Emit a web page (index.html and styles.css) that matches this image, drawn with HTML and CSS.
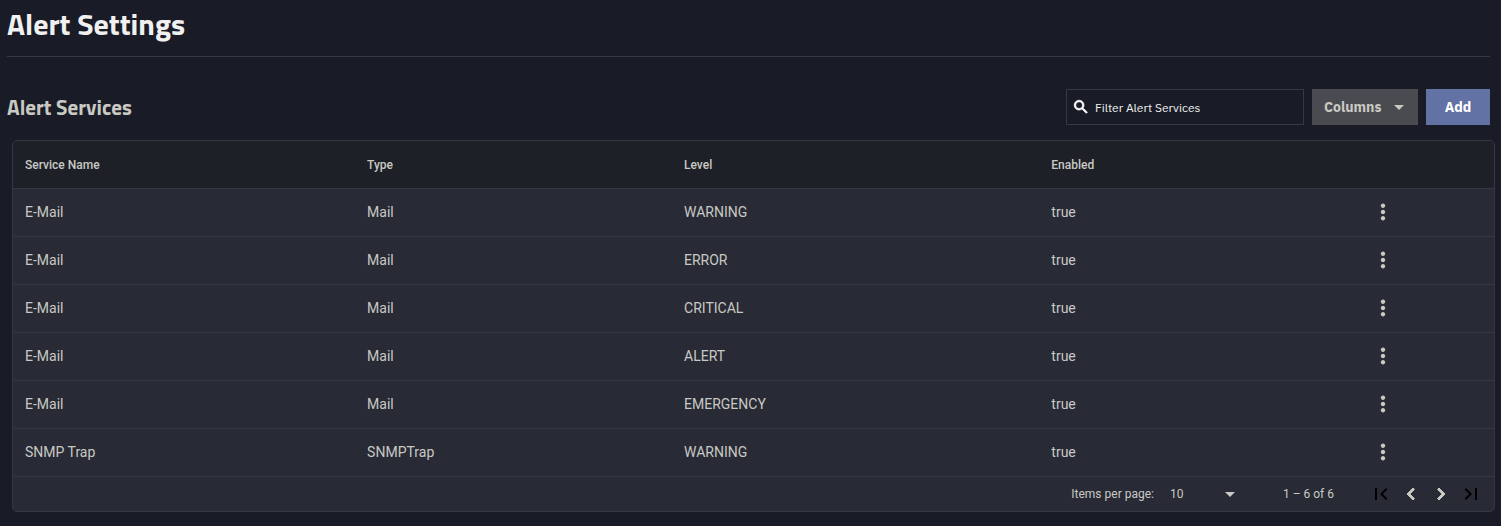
FILE: index.html
```html
<!DOCTYPE html>
<html lang="en">

<head>
    <meta charset="UTF-8">
    <meta name="viewport" content="width=device-width, initial-scale=1.0">
    <title>Alert Settings</title>
    <link rel="stylesheet" href="styles.css">
</head>

<body>
    <!-- Shared icons -->
    <svg class="sprite" aria-hidden="true">
        <symbol id="icon-more" viewBox="0 0 24 24">
            <path d="M12 8c1.2 0 2.2-1 2.2-2.2s-1-2.2-2.2-2.2-2.2 1-2.2 2.2 1 2.2 2.2 2.2zm0 1.8c-1.2 0-2.2 1-2.2 2.2s1 2.2 2.2 2.2 2.2-1 2.2-2.2-1-2.2-2.2-2.2zm0 6.2c-1.2 0-2.2 1-2.2 2.2s1 2.2 2.2 2.2 2.2-1 2.2-2.2-1-2.2-2.2-2.2z" />
        </symbol>
    </svg>

    <header class="page-header">
        <h1>Alert Settings</h1>
    </header>

    <main>
        <div class="toolbar">
            <h2>Alert Services</h2>
            <div class="search">
                <svg class="search-icon" viewBox="0 0 24 24" aria-hidden="true">
                    <path d="M15.5 14h-.79l-.28-.27C15.41 12.59 16 11.11 16 9.5 16 5.91 13.09 3 9.5 3S3 5.91 3 9.5 5.91 16 9.5 16c1.61 0 3.09-.59 4.23-1.57l.27.28v.79l5 4.99L20.49 19l-4.99-5zm-6 0C7.01 14 5 11.99 5 9.5S7.01 5 9.5 5 14 7.01 14 9.5 11.99 14 9.5 14z" />
                </svg>
                <input type="text" aria-label="Filter Alert Services" placeholder="Filter Alert Services">
            </div>
            <button type="button" class="btn btn-columns">Columns <span class="caret"></span></button>
            <button type="button" class="btn btn-add">Add</button>
        </div>

        <div class="card">
            <table>
                <thead>
                    <tr>
                        <th class="col-name">Service Name</th>
                        <th class="col-type">Type</th>
                        <th class="col-level">Level</th>
                        <th class="col-enabled">Enabled</th>
                        <td></td>
                    </tr>
                </thead>
                <tbody>
                    <tr>
                        <td>E-Mail</td>
                        <td>Mail</td>
                        <td>WARNING</td>
                        <td>true</td>
                        <td><button type="button" class="icon-btn" aria-label="More actions"><svg><use href="#icon-more" /></svg></button></td>
                    </tr>
                    <tr>
                        <td>E-Mail</td>
                        <td>Mail</td>
                        <td>ERROR</td>
                        <td>true</td>
                        <td><button type="button" class="icon-btn" aria-label="More actions"><svg><use href="#icon-more" /></svg></button></td>
                    </tr>
                    <tr>
                        <td>E-Mail</td>
                        <td>Mail</td>
                        <td>CRITICAL</td>
                        <td>true</td>
                        <td><button type="button" class="icon-btn" aria-label="More actions"><svg><use href="#icon-more" /></svg></button></td>
                    </tr>
                    <tr>
                        <td>E-Mail</td>
                        <td>Mail</td>
                        <td>ALERT</td>
                        <td>true</td>
                        <td><button type="button" class="icon-btn" aria-label="More actions"><svg><use href="#icon-more" /></svg></button></td>
                    </tr>
                    <tr>
                        <td>E-Mail</td>
                        <td>Mail</td>
                        <td>EMERGENCY</td>
                        <td>true</td>
                        <td><button type="button" class="icon-btn" aria-label="More actions"><svg><use href="#icon-more" /></svg></button></td>
                    </tr>
                    <tr>
                        <td>SNMP Trap</td>
                        <td>SNMPTrap</td>
                        <td>WARNING</td>
                        <td>true</td>
                        <td><button type="button" class="icon-btn" aria-label="More actions"><svg><use href="#icon-more" /></svg></button></td>
                    </tr>
                </tbody>
            </table>

            <!-- Pagination -->
            <div class="paginator">
                <label for="pageSize">Items per page:</label>
                <div class="page-size">
                    <select id="pageSize">
                        <option>10</option>
                        <option>25</option>
                        <option>50</option>
                    </select>
                    <span class="caret"></span>
                </div>
                <span class="range">1 – 6 of 6</span>
                <button type="button" class="page-btn" aria-label="First page" disabled>
                    <svg viewBox="0 0 24 24"><path d="M18.41 16.59L13.82 12l4.59-4.59L17 6l-6 6 6 6zM6 6h2v12H6z" /></svg>
                </button>
                <button type="button" class="page-btn page-btn-active" aria-label="Previous page">
                    <svg viewBox="0 0 24 24"><path d="M15.41 7.41L14 6l-6 6 6 6 1.41-1.41L10.83 12z" /></svg>
                </button>
                <button type="button" class="page-btn page-btn-active" aria-label="Next page">
                    <svg viewBox="0 0 24 24"><path d="M10 6L8.59 7.41 13.17 12l-4.58 4.59L10 18l6-6z" /></svg>
                </button>
                <button type="button" class="page-btn" aria-label="Last page" disabled>
                    <svg viewBox="0 0 24 24"><path d="M5.59 7.41L10.18 12l-4.59 4.59L7 18l6-6-6-6zM16 6h2v12h-2z" /></svg>
                </button>
            </div>
        </div>
    </main>
</body>

</html>
```
FILE: styles.css
```css
* {
    box-sizing: border-box;
}

body {
    margin: 0;
    background: #191b26;
    color: #c9c9c3;
    font-family: Roboto, "Liberation Sans", sans-serif;
    font-size: 14px;
}

.sprite {
    display: none;
}

svg {
    fill: currentColor;
}

h1,
h2 {
    margin: 0;
    font-family: "Titillium Web", "Noto Sans", sans-serif;
    font-weight: 700;
}

h1 {
    color: #f0f0f0;
    font-size: 30px;
    line-height: 48px;
}

h2 {
    margin-right: auto;
    font-size: 21px;
    line-height: 36px;
}

.page-header {
    margin: 0 11px 0 7px;
    padding-bottom: 8px;
    border-bottom: 1px solid #343746;
}

.toolbar {
    display: flex;
    gap: 8px;
    margin: 32px 11px 15px 7px;
}

.search {
    display: flex;
    align-items: center;
    gap: 5px;
    width: 238px;
    height: 36px;
    padding: 0 5px;
    border: 1px solid #343746;
}

.search-icon {
    flex: none;
    width: 18px;
    height: 18px;
    color: #fff;
    stroke: currentColor;
}

.search input {
    flex: 1;
    min-width: 0;
    padding: 0;
    border: 0;
    outline: 0;
    background: none;
    color: #f0f0f0;
    font: 12px "IBM Plex Sans", "Open Sans", sans-serif;
}

.search input::placeholder {
    color: #f0f0f0;
    opacity: 1;
}

.btn {
    display: flex;
    align-items: center;
    justify-content: center;
    height: 36px;
    padding: 0 12px;
    border: 0;
    font: 700 14px "IBM Plex Sans", "Noto Sans", sans-serif;
}

.btn-columns {
    justify-content: flex-start;
    gap: 12px;
    width: 106px;
    background: #4a4b50;
    color: #c9c9c3;
}

.btn-add {
    width: 64px;
    background: #6272a4;
    color: #fff;
}

.caret {
    border: 5px solid transparent;
    border-top-color: currentColor;
    border-bottom: 0;
}

/* Table */
.card {
    margin: 0 6px 0 12px;
    border: 1px solid #343746;
    border-radius: 5px;
    background: #282a36;
    overflow: hidden;
}

table {
    width: 100%;
    table-layout: fixed;
    border-collapse: separate;
    border-spacing: 0;
}

th,
td {
    height: 48px;
    padding: 0 12px;
    border-bottom: 1px solid #343746;
    text-align: left;
}

td {
    padding-bottom: 2px;
}

thead {
    background: #1d2027;
}

th {
    font-size: 12px;
    font-weight: 500;
}

.col-name {
    width: 23.1%;
}

.col-type {
    width: 21.4%;
}

.col-level {
    width: 24.8%;
}

.col-enabled {
    width: 21.6%;
}

.icon-btn,
.page-btn {
    display: block;
    padding: 0;
    border: 0;
    background: none;
    color: inherit;
}

.icon-btn svg {
    display: block;
    width: 24px;
    height: 24px;
}

/* Paginator */
.paginator {
    display: flex;
    align-items: center;
    justify-content: flex-end;
    height: 34px;
    padding-right: 8px;
    font-size: 12px;
}

.page-size {
    display: flex;
    align-items: center;
    width: 65px;
    margin: 0 48px 0 16px;
}

.page-size select {
    flex: 1;
    min-width: 0;
    padding: 0;
    border: 0;
    appearance: none;
    background: none;
    color: inherit;
    font: inherit;
}

.range {
    margin-right: 32px;
}

.page-btn {
    width: 30px;
    height: 30px;
}

.page-btn:disabled {
    color: #000;
}

.page-btn svg {
    display: block;
    width: 24px;
    height: 24px;
    margin: auto;
}

.page-btn-active svg {
    stroke: currentColor;
}
```
